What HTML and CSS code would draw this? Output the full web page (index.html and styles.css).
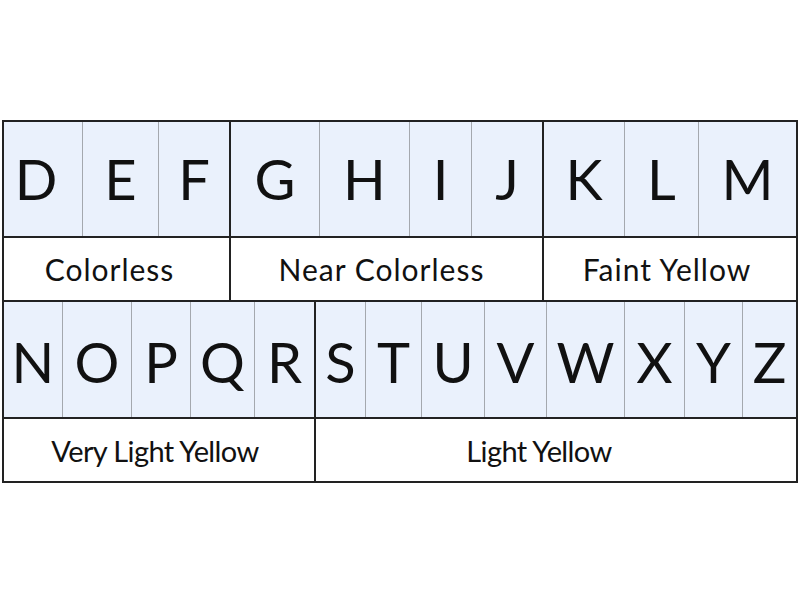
FILE: index.html
```html
<!DOCTYPE html>
<html>
<head>
<meta charset="utf-8">
<link rel="stylesheet" href="styles.css">
</head>
<body>
<div class="chart">
  <div class="band band1">
    <div class="l first">D</div><div class="l">E</div><div class="l g">F</div>
    <div class="l">G</div><div class="l">H</div><div class="l">I</div><div class="l g">J</div>
    <div class="l">K</div><div class="l">L</div><div class="l e">M</div>
    <div class="lab s1">Colorless</div>
    <div class="lab s2">Near Colorless</div>
    <div class="lab s3 e">Faint Yellow</div>
  </div>
  <div class="band band2">
    <div class="l">N</div><div class="l">O</div><div class="l">P</div><div class="l">Q</div><div class="l g">R</div>
    <div class="l">S</div><div class="l">T</div><div class="l">U</div><div class="l">V</div><div class="l">W</div><div class="l">X</div><div class="l">Y</div><div class="l e">Z</div>
    <div class="lab s4">Very Light Yellow</div>
    <div class="lab s5 e">Light Yellow</div>
  </div>
</div>
</body>
</html>
```

FILE: styles.css
```css
html, body {
  margin: 0;
  padding: 0;
  background: #ffffff;
}
body {
  font-family: Lato, "Open Sans", sans-serif;
  color: #111111;
}
.chart {
  padding-top: 120px;
  padding-left: 2px;
}
.band {
  display: grid;
  width: 792px;
  border: 2px solid #222222;
}
.band2 {
  border-top: 0;
}
.band1 {
  grid-template-columns: 79px 76px 72px 89px 90px 62px 72px 81px 74px 97px;
  grid-template-rows: 114px 64px;
}
.band2 {
  grid-template-columns: 59px 69px 59px 64px 61px 50px 56px 63px 62px 78px 60px 58px 53px;
  grid-template-rows: 115px 64px;
}
.l {
  background: #eaf1fc;
  border-right: 1px solid #a4a8ae;
  display: flex;
  align-items: center;
  justify-content: center;
  font-size: 56px;
  line-height: 1;
}
.l.first {
  padding-right: 14px;
}
.band2 .l {
  padding-top: 4px;
}
.l.g {
  border-right: 2px solid #222222;
}
.l.e, .lab.e {
  border-right: 0;
}
.lab {
  border-top: 2px solid #222222;
  border-right: 2px solid #222222;
  display: flex;
  align-items: center;
  justify-content: center;
  font-size: 30px;
  letter-spacing: 1px;
  line-height: 1;
  background: #ffffff;
}
.band2 .lab {
  font-size: 29px;
  letter-spacing: -0.6px;
}
.s1 { grid-column: 1 / 4; padding-right: 14px; }
.s2 { grid-column: 4 / 8; padding-right: 10px; }
.s3 { grid-column: 8 / 11; padding-right: 6px; }
.s4 { grid-column: 1 / 6; padding-right: 8px; }
.s5 { grid-column: 6 / 14; padding-right: 34px; }
```
